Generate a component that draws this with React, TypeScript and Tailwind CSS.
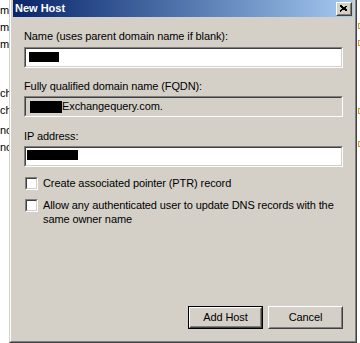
import React from "react";

const font = { fontFamily: '"Liberation Sans", Tahoma, sans-serif' };

function Sunken({ children, bg = "bg-white", className = "" }: { children?: React.ReactNode; bg?: string; className?: string }) {
  return (
    <div className={`border border-t-[#808080] border-l-[#808080] border-b-white border-r-white ${className}`}>
      <div className={`border border-t-[#404040] border-l-[#404040] border-b-[#d4d0c8] border-r-[#d4d0c8] h-full ${bg}`}>
        {children}
      </div>
    </div>
  );
}

function Check({ children }: { children: React.ReactNode }) {
  return (
    <div className="flex items-start">
      <Sunken className="w-[13px] h-[13px] shrink-0 mt-[1px]" />
      <div className="ml-[5px] leading-[14px] text-black">{children}</div>
    </div>
  );
}

function Button({ label, def = false }: { label: string; def?: boolean }) {
  const inner = (
    <div className="border border-t-white border-l-white border-b-[#404040] border-r-[#404040] h-full">
      <div className="border border-t-[#d4d0c8] border-l-[#d4d0c8] border-b-[#808080] border-r-[#808080] h-full flex items-center justify-center text-black">
        {label}
      </div>
    </div>
  );
  return (
    <div className={`w-[75px] h-[23px] ${def ? "border border-black" : ""}`}>{inner}</div>
  );
}

export default function App() {
  const leftLines: [string, number][] = [
    ["me", 4],
    ["me", 21],
    ["me", 38],
    ["cha", 87],
    ["cha", 104],
    ["ncf", 124],
    ["ncf", 141],
  ];
  return (
    <div className="w-[360px] h-[343px] bg-white flex overflow-hidden text-[11px] tracking-[-0.1px]" style={font}>
      {/* left desktop strip */}
      <div className="w-[9px] h-full overflow-hidden relative shrink-0">
        {leftLines.map(([t, y], i) => (
          <div
            key={i}
            className="absolute left-0 w-[9px] overflow-hidden whitespace-nowrap text-black leading-[13px]"
            style={{ top: y }}
          >
            {t}
          </div>
        ))}
      </div>

      {/* dialog */}
      <div className="w-[348px] h-[343px] shrink-0 border-l border-r border-b border-l-[#d4d0c8] border-r-[#404040] border-b-[#404040]">
        <div className="h-full border-l border-r border-b border-l-white border-r-[#808080] border-b-[#808080] bg-[#d4d0c8] px-[2px] flex flex-col">
          {/* title bar */}
          <div className="h-[17px] shrink-0 flex items-center justify-between bg-gradient-to-r from-[#0a246a] to-[#a6caf0] pl-[2px] pr-[1px]">
            <span className="text-white font-bold text-[11px] leading-[13px] tracking-normal">New Host</span>
            <div className="w-[16px] h-[14px] border border-t-white border-l-white border-b-[#404040] border-r-[#404040]">
              <div className="h-full border border-t-[#d4d0c8] border-l-[#d4d0c8] border-b-[#808080] border-r-[#808080] bg-[#d4d0c8] flex items-center justify-center">
                <svg width="8" height="7" viewBox="0 0 8 7">
                  <path d="M0.5 0.5 L7.5 6.5 M1.5 0.5 L7.5 5.5 M0.5 1.5 L6.5 6.5 M7.5 0.5 L0.5 6.5 M6.5 0.5 L0.5 5.5" stroke="black" strokeWidth="1" fill="none" shapeRendering="crispEdges" />
                </svg>
              </div>
            </div>
          </div>

          {/* body */}
          <div className="flex-1 flex flex-col pl-[11px] pr-[10px] text-black">
            <div className="mt-[13px] leading-[13px]">Name (uses parent domain name if blank):</div>
            <Sunken className="h-[21px] mt-[4px]">
              <div className="w-[30px] h-[10px] bg-black ml-[3px] mt-[3px]" />
            </Sunken>

            <div className="mt-[12px] leading-[13px]">Fully qualified domain name (FQDN):</div>
            <Sunken className="h-[21px] mt-[3px]" bg="bg-[#d4d0c8]">
              <div className="flex items-center h-full pl-[4px] text-[#000]">
                <div className="w-[32px] h-[12px] bg-black" />
                <span className="leading-[13px]">Exchangequery.com.</span>
              </div>
            </Sunken>

            <div className="mt-[13px] leading-[13px]">IP address:</div>
            <Sunken className="h-[21px] mt-[3px]">
              <div className="w-[51px] h-[10px] bg-black ml-[1px] mt-[2px]" />
            </Sunken>

            <div className="mt-[9px] pl-[1px] flex flex-col gap-[8px]">
              <Check>Create associated pointer (PTR) record</Check>
              <Check>
                Allow any authenticated user to update DNS records with the
                <br />
                same owner name
              </Check>
            </div>

            <div className="flex-1" />
            <div className="flex justify-end gap-[5px] mb-[12px]">
              <Button label="Add Host" def />
              <Button label="Cancel" />
            </div>
          </div>
        </div>
      </div>

      {/* right desktop strip */}
      <div className="flex-1 relative">
        {[23, 40, 108, 141].map((y, i) => (
          <div key={i} className="absolute left-[1px] w-[6px] h-[6px] border border-[#c8a040] bg-[#fff8d0]" style={{ top: y }}>
            <div className="w-[2px] h-[2px] bg-[#3060c0] mt-[1px] ml-[1px]" />
          </div>
        ))}
      </div>
    </div>
  );
}
